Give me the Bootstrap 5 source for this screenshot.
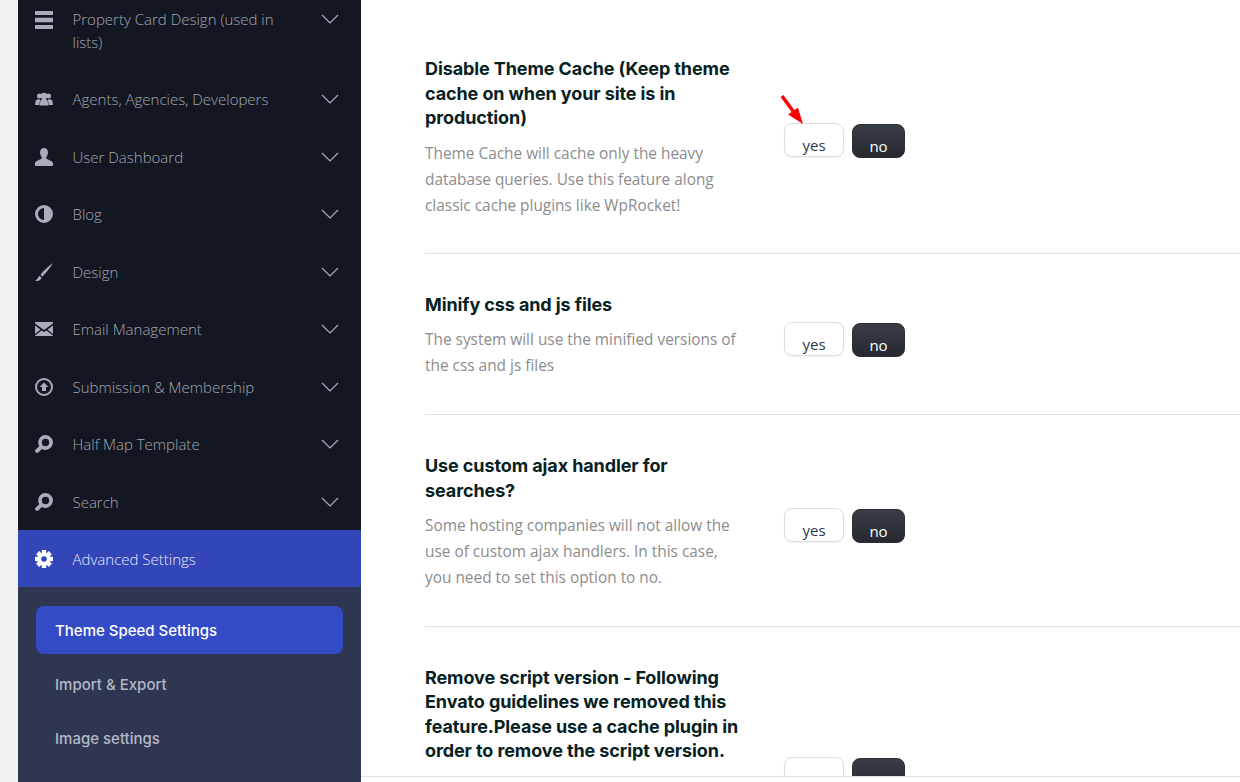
<!DOCTYPE html>
<html lang="en"><head><meta charset="utf-8"><title>Theme Speed Settings</title>
<link rel="stylesheet" href="https://cdn.jsdelivr.net/npm/bootstrap@5.3.0/dist/css/bootstrap.min.css">
<style>
html,body{height:782px;overflow:hidden;background:#fff}
.shell{height:782px;background:#f1f1f1;padding-left:18px}
.side{width:343px;background:#131722;font-family:"Open Sans","Noto Sans",sans-serif;font-weight:300;flex:none}
.mrow{height:57.5px;padding:1px 22px 0 17px;color:#a3a7b4;font-size:15px}
.mrow.first{height:70px;align-items:flex-start!important;padding-top:8px;line-height:23px}
.mrow.on{height:57px;background:#3346b8;color:#e6e8f5}
.mico{width:18px;height:18px;margin-right:19.5px;flex:none;fill:#a9adba}
.on .mico{fill:#fff}
.mtxt{flex:1}
.first .mtxt{max-width:215px;margin-right:auto}
.chev{width:18px;height:10px;flex:none;fill:none;stroke:#a9adba;stroke-width:1.2}
.first .chev{margin-top:6px}
.first .mico{margin-top:3px}
.subm{background:#2e3652;padding:19px 18px 0;height:195px;font-family:Inter,sans-serif;font-weight:500;font-size:15px;color:#b4b8c6}
.subi{height:48px;padding:3px 19px 0;margin-bottom:5.7px;border-radius:8px}
.subi.on2{background:#344bc8;color:#fff}
.mainp{background:#fff;flex:1;padding:57px 0 0 64px;position:relative;overflow:hidden;font-family:Inter,sans-serif}
.optrow{border-bottom:1px solid #dfe0e4;margin-bottom:39px;padding-bottom:34px}
.optrow.tall2{padding-bottom:35px}
.optrow.tall3{padding-bottom:34.5px}
.optl{width:320px;flex:none}
.optt{font-size:18px;font-weight:700;line-height:24.5px;color:#07211f;margin:0 0 10px;letter-spacing:-.1px}
.optd{font-family:"Open Sans","Noto Sans",sans-serif;font-size:15.4px;line-height:26px;color:#8c8c8c;margin:0}
.optb{margin-left:39px;gap:8px;padding-top:var(--pt)}
.yn{height:34px;border-radius:8px;font-size:15px;line-height:1;padding-top:14px;text-align:center;font-family:"Open Sans","Noto Sans",sans-serif}
.yes{width:60px;background:#fff;border:1px solid #dcdde3;color:#2c3650;box-shadow:0 1px 2px rgba(0,0,0,.06)}
.nob{width:53px;margin-top:1px;background:linear-gradient(#393d45,#26292f);color:#fff;border:1px solid #2c2f36}
.pa{--pt:66px}.pb{--pt:29px}.pc{--pt:54px}.pd{--pt:91px}
.bottomline{position:absolute;left:0;right:0;top:776px;height:6px;background:#fff;border-top:1px solid #dfe0e4}
.arrow{position:absolute;left:779px;top:95px;width:24px;height:30px}
</style></head>
<body>
<div class="shell d-flex">
<nav class="side">
<div class="mrow first d-flex"><svg class="mico" viewBox="0 0 18 18"><path d="M0 0h18v4H0zM0 6.800h18v4.400H0zM0 14h18v4H0z"/></svg><span class="mtxt">Property Card Design (used in lists)</span><svg class="chev" viewBox="0 0 18 10"><path d="M1 1l8 8 8-8"/></svg></div>
<div class="mrow d-flex align-items-center"><svg class="mico" viewBox="0 0 18 18"><circle cx="4.500" cy="6" r="2.500"/><circle cx="13.500" cy="6" r="2.500"/><circle cx="9" cy="6" r="3.200"/><path d="M0 15l.7-4.500 2.500-1.500 2 1-1 5zM18 15l-.7-4.500-2.500-1.500-2 1 1 5zM4.500 15.500l1-5 1.700-1.500h3.600l1.700 1.500 1 5z"/></svg><span class="mtxt">Agents, Agencies, Developers</span><svg class="chev" viewBox="0 0 18 10"><path d="M1 1l8 8 8-8"/></svg></div>
<div class="mrow d-flex align-items-center"><svg class="mico" viewBox="0 0 18 18"><path d="M9 0c2.500 0 4 2 4 4.500S11.500 9 11 10c0 1.500 7 2.500 7 5.500V18H0v-2.500C0 12.500 7 11.500 7 10c-.5-1-2-3-2-5.500S6.500 0 9 0z"/></svg><span class="mtxt">User Dashboard</span><svg class="chev" viewBox="0 0 18 10"><path d="M1 1l8 8 8-8"/></svg></div>
<div class="mrow d-flex align-items-center"><svg class="mico" viewBox="0 0 18 18"><path fill-rule="evenodd" d="M9 0a9 9 0 1 1 0 18A9 9 0 0 1 9 0zm0 3a6 6 0 0 0 0 12z"/></svg><span class="mtxt">Blog</span><svg class="chev" viewBox="0 0 18 10"><path d="M1 1l8 8 8-8"/></svg></div>
<div class="mrow d-flex align-items-center"><svg class="mico" viewBox="0 0 18 18"><path d="M18 0C14 3 8 8 5.500 12l2 1.500C11 10 15 5 18 0zM4.500 13C3 13.500 3 16 0 18c3 0 6-.5 6.500-3.500z"/></svg><span class="mtxt">Design</span><svg class="chev" viewBox="0 0 18 10"><path d="M1 1l8 8 8-8"/></svg></div>
<div class="mrow d-flex align-items-center"><svg class="mico" viewBox="0 0 18 18"><path d="M0 2h18v1.500L9 10 0 3.500zM0 5.500l5.500 4L0 14zM18 5.500l-5.500 4L18 14zM6.500 10.500L9 12l2.500-1.500L18 15.500V16H0v-.5z"/></svg><span class="mtxt">Email Management</span><svg class="chev" viewBox="0 0 18 10"><path d="M1 1l8 8 8-8"/></svg></div>
<div class="mrow d-flex align-items-center"><svg class="mico" viewBox="0 0 18 18"><path fill-rule="evenodd" d="M9 0a9 9 0 1 1 0 18A9 9 0 0 1 9 0zm0 2a7 7 0 1 0 0 14A7 7 0 0 0 9 2zm0 2.500L13.500 9H11v4H7V9H4.500z"/></svg><span class="mtxt">Submission &amp; Membership</span><svg class="chev" viewBox="0 0 18 10"><path d="M1 1l8 8 8-8"/></svg></div>
<div class="mrow d-flex align-items-center"><svg class="mico" viewBox="0 0 18 18"><path fill-rule="evenodd" d="M10.500 0a7.500 7.500 0 1 1-3.600 14.100L3.300 17.400c-1.100 1-3.300.3-3.300-1.400 0-.6.300-1.100.7-1.500l3.500-3.300A7.500 7.500 0 0 1 10.500 0zm0 3.800a3.700 3.700 0 1 0 0 7.400 3.700 3.700 0 0 0 0-7.400z"/></svg><span class="mtxt">Half Map Template</span><svg class="chev" viewBox="0 0 18 10"><path d="M1 1l8 8 8-8"/></svg></div>
<div class="mrow d-flex align-items-center"><svg class="mico" viewBox="0 0 18 18"><path fill-rule="evenodd" d="M10.500 0a7.500 7.500 0 1 1-3.600 14.100L3.300 17.400c-1.100 1-3.300.3-3.300-1.400 0-.6.300-1.100.7-1.500l3.500-3.300A7.500 7.500 0 0 1 10.500 0zm0 3.800a3.700 3.700 0 1 0 0 7.400 3.700 3.700 0 0 0 0-7.400z"/></svg><span class="mtxt">Search</span><svg class="chev" viewBox="0 0 18 10"><path d="M1 1l8 8 8-8"/></svg></div>
<div class="mrow on d-flex align-items-center"><svg class="mico" viewBox="0 0 18 18"><g><rect x="6.800" y="0" width="4.400" height="18"/><rect x="0" y="6.800" width="18" height="4.400"/><rect x="6.800" y="0" width="4.400" height="18" transform="rotate(45 9 9)"/><rect x="6.800" y="0" width="4.400" height="18" transform="rotate(-45 9 9)"/><circle cx="9" cy="9" r="6.600"/></g><circle cx="9" cy="9" r="2.800" style="fill:#3346b8"/></svg><span class="mtxt">Advanced Settings</span></div>
<div class="subm">
<div class="subi on2 d-flex align-items-center">Theme Speed Settings</div>
<div class="subi d-flex align-items-center">Import &amp; Export</div>
<div class="subi d-flex align-items-center">Image settings</div>
</div>
</nav>
<main class="mainp">
<section class="optrow d-flex"><div class="optl"><h2 class="optt">Disable Theme Cache (Keep theme cache on when your site is in production)</h2><p class="optd">Theme Cache will cache only the heavy database queries. Use this feature along classic cache plugins like WpRocket!</p></div><div class="optb pa d-flex align-items-start"><div class="yn yes">yes</div><div class="yn nob">no</div></div></section>
<section class="optrow tall2 d-flex"><div class="optl"><h2 class="optt">Minify css and js files</h2><p class="optd">The system will use the minified versions of the css and js files</p></div><div class="optb pb d-flex align-items-start"><div class="yn yes">yes</div><div class="yn nob">no</div></div></section>
<section class="optrow tall3 d-flex"><div class="optl"><h2 class="optt">Use custom ajax handler for searches?</h2><p class="optd">Some hosting companies will not allow the use of custom ajax handlers. In this case, you need to set this option to no.</p></div><div class="optb pc d-flex align-items-start"><div class="yn yes">yes</div><div class="yn nob">no</div></div></section>
<section class="optrow d-flex"><div class="optl"><h2 class="optt">Remove script version - Following Envato guidelines we removed this feature.Please use a cache plugin in order to remove the script version.</h2></div><div class="optb pd d-flex align-items-start"><div class="yn yes" role="button" aria-label="yes"></div><div class="yn nob" role="button" aria-label="no"></div></div></section>
<div class="bottomline"></div>
</main>
</div>
<svg class="arrow" viewBox="0 0 24 30"><path d="M1.600 2L4.400 0l11 15 3.500-2.500L24 29 9.100 19.500l3.500-2.500z" fill="#f00"/></svg>
<script src="https://cdn.jsdelivr.net/npm/bootstrap@5.3.0/dist/js/bootstrap.bundle.min.js"></script>
</body></html>
